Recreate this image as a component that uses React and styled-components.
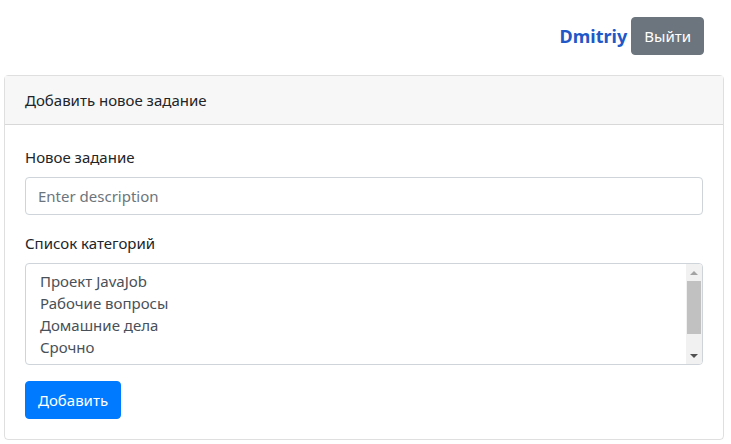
import styled, { createGlobalStyle } from 'styled-components';

const GlobalStyle = createGlobalStyle`
    body {
        margin: 0;
        font-family: "Noto Sans", "Open Sans", sans-serif;
        font-size: 15px;
        color: #212529;
        background: #fff;
    }
`

const Page = styled.div`
    padding: 0 7px 0 4px;
`

const TopBar = styled.div`
    display: flex;
    justify-content: flex-end;
    align-items: center;
    gap: 4px;
    padding: 17px 20px 0 0;
    margin-bottom: 20px;
`

const UserName = styled.span`
    font-size: 18px;
    font-weight: 700;
    color: #2157c7;
`

const Button = styled.button`
    font-family: inherit;
    font-size: 15px;
    line-height: 24px;
    height: 38px;
    padding: 6px 12px;
    border: 1px solid ${p => p.$bg};
    border-radius: 4px;
    color: #fff;
    background: ${p => p.$bg};
    cursor: pointer;
`

const Card = styled.div`
    border: 1px solid rgba(0, 0, 0, .125);
    border-radius: 4px;
`

const CardHeader = styled.div`
    padding: 12px 20px;
    line-height: 24px;
    background: #f7f7f7;
    border-bottom: 1px solid rgba(0, 0, 0, .125);
`

const CardBody = styled.div`
    padding: 20px;
    display: flex;
    flex-direction: column;
    align-items: flex-start;
`

const Group = styled.div`
    align-self: stretch;
    margin-bottom: 16px;
`

const Label = styled.label`
    display: block;
    line-height: 24px;
    margin-bottom: 8px;
`

const Input = styled.input`
    box-sizing: border-box;
    width: 100%;
    height: 38px;
    padding: 6px 12px;
    font-family: inherit;
    font-size: 15px;
    color: #495057;
    border: 1px solid #ced4da;
    border-radius: 4px;
    &::placeholder { color: #6c757d; }
`

const ListBox = styled.div`
    display: flex;
    height: 102px;
    box-sizing: border-box;
    border: 1px solid #ced4da;
    border-radius: 4px;
    overflow: hidden;
    color: #495057;
`

const Options = styled.div`
    flex: 1;
    padding: 6px 14px;
    overflow: hidden;
`

const OptionRow = styled.div`
    line-height: 22px;
    white-space: nowrap;
`

const ScrollBar = styled.div`
    width: 16px;
    display: flex;
    flex-direction: column;
    background: #f1f1f1;
`

const Arrow = styled.div`
    height: 17px;
    display: flex;
    align-items: center;
    justify-content: center;
    &::after {
        content: "";
        border-left: 4px solid transparent;
        border-right: 4px solid transparent;
        ${p => p.$up
            ? 'border-bottom: 4px solid #a3a3a3;'
            : 'border-top: 4px solid #505050;'}
    }
`

const Thumb = styled.div`
    height: 53px;
    margin: 0 1px;
    background: #c1c1c1;
`

const Track = styled.div`
    flex: 1;
`

const categories = ['Проект JavaJob', 'Рабочие вопросы', 'Домашние дела', 'Срочно']

const App = () => {
    return (
        <Page>
            <GlobalStyle />
            <TopBar>
                <UserName>Dmitriy</UserName>
                <Button $bg="#6c757d">Выйти</Button>
            </TopBar>
            <Card>
                <CardHeader>Добавить новое задание</CardHeader>
                <CardBody>
                    <Group>
                        <Label>Новое задание</Label>
                        <Input placeholder="Enter description" />
                    </Group>
                    <Group>
                        <Label>Список категорий</Label>
                        <ListBox role="listbox">
                            <Options>
                                {categories.map(c => <OptionRow key={c} role="option">{c}</OptionRow>)}
                            </Options>
                            <ScrollBar>
                                <Arrow $up />
                                <Thumb />
                                <Track />
                                <Arrow />
                            </ScrollBar>
                        </ListBox>
                    </Group>
                    <Button $bg="#007bff">Добавить</Button>
                </CardBody>
            </Card>
        </Page>
    )
}

export default App
